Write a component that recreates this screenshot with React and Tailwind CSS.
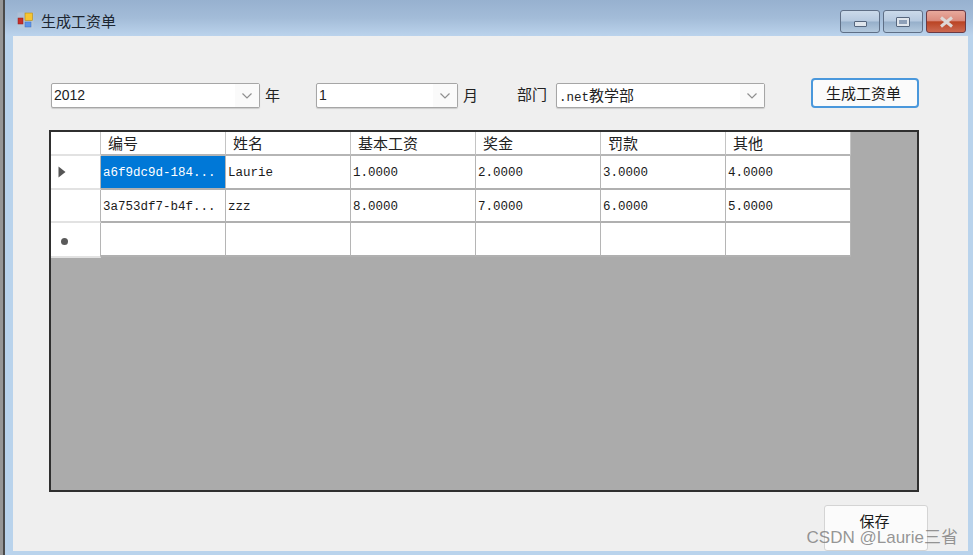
const cjk = '"Noto Sans CJK SC", "Liberation Sans", sans-serif';
const mono = '"Liberation Mono", "DejaVu Sans Mono", "Noto Sans CJK SC", monospace';
const headers = ["编号", "姓名", "基本工资", "奖金", "罚款", "其他"];
const rows = [
  ["a6f9dc9d-184...", "Laurie", "1.0000", "2.0000", "3.0000", "4.0000"],
  ["3a753df7-b4f...", "zzz", "8.0000", "7.0000", "6.0000", "5.0000"],
  ["", "", "", "", "", ""],
];
const rowH = ["h-[34px]", "h-[33px]", "h-[34px]"];

function Combo({ children, className }) {
  return (
    <div className={"h-[25px] flex items-center justify-between bg-white border border-[#a6a6a6] rounded-[2px] shadow-[0_1px_1px_rgba(0,0,0,0.15)] " + className}>
      <span className="pl-[2px] text-[14px] text-[#222] whitespace-pre" style={{ fontFamily: '"Liberation Sans", sans-serif' }}>{children}</span>
      <span className="w-[24px] h-full flex items-center justify-center bg-[#fafafa]">
        <svg width="12" height="8" viewBox="0 0 12 8" fill="none" stroke="#8f8f8f" strokeWidth="1.2"><path d="M1.5 1.5 6 6l4.5-4.5" /></svg>
      </span>
    </div>
  );
}

function WinBtn({ red, children }) {
  return (
    <div className={"w-[40px] h-[23px] rounded-[3px] border flex items-center justify-center " + (red
      ? "bg-[linear-gradient(#e8a99c_0%,#db8c7e_45%,#ba4424_52%,#cc6a52_100%)] border-[#6b3a44]"
      : "bg-[linear-gradient(#cbdaea_0%,#b6c9df_48%,#96afca_52%,#b3c8dd_100%)] border-[#5f6f86]")}>
      {children}
    </div>
  );
}

export default function App() {
  return (
    <div className="relative w-[973px] h-[555px] overflow-hidden border-l-[3px] border-[#969696]" style={{ fontFamily: cjk }}>
      <div className="w-full h-full flex flex-col bg-[#b9d3ec] border-l-2 border-[#4a4a4a]">
        <div className="h-[36px] shrink-0 flex items-start bg-[linear-gradient(#97b1cf_0%,#a3bcd8_50%,#bbd3ec_100%)] pl-[12px] pr-[7px]">
          <svg className="mt-[12px]" width="17" height="17" viewBox="0 0 17 17">
            <rect x="0.5" y="0.5" width="16" height="16" fill="#c9ced6" opacity="0.35" />
            <rect x="1" y="6" width="5" height="6" fill="#c62f2a" stroke="#8f1f1f" strokeWidth="0.5" />
            <rect x="8" y="1" width="7.5" height="7.5" fill="#f6c531" stroke="#b58a14" strokeWidth="0.6" />
            <rect x="8" y="10" width="6" height="5" fill="#5c93ea" stroke="#3f6fb8" strokeWidth="0.5" />
          </svg>
          <span className="mt-[10px] ml-[7px] text-[15px] leading-[22px] text-[#1c2530]">生成工资单</span>
          <div className="ml-auto mt-[10px] flex gap-[3px]">
            <WinBtn><div className="w-[13px] h-[6px] bg-[#dfe5ec] border border-[#55657c] rounded-[1px] mt-[4px]" /></WinBtn>
            <WinBtn><div className="w-[14px] h-[10px] bg-[#dfe5ec] border border-[#55657c] rounded-[1px] flex items-center justify-center"><div className="w-[8px] h-[4px] bg-[#8ea0b8]" /></div></WinBtn>
            <WinBtn red>
              <svg width="15" height="12" viewBox="0 0 15 12"><path d="M2 1.5 13 10.5M13 1.5 2 10.5" stroke="#ddd8d6" strokeWidth="3" /></svg>
            </WinBtn>
          </div>
        </div>

        <div className="ml-[8px] mr-[5px] mb-[4px] flex-1 min-h-0 bg-[#efefef] flex flex-col pl-[36px]">
          <div className="mt-[43px] h-[29px] flex items-end text-[15px] text-[#222] shrink-0">
            <Combo className="ml-[2px] w-[209px]">2012</Combo>
            <span className="ml-[5px] w-[51px] h-[25px] leading-[24px]">年</span>
            <Combo className="w-[142px]">1</Combo>
            <span className="ml-[5px] w-[54px] h-[25px] leading-[24px]">月</span>
            <span className="w-[39px] h-[25px] leading-[22px]">部门</span>
            <Combo className="w-[209px]"><span style={{ fontFamily: mono, fontSize: 12.5 }}>.net</span><span style={{ fontFamily: cjk, fontSize: 15 }}>教学部</span></Combo>
            <div className="ml-[46px] w-[108px] h-[30px] bg-[#fbfbfb] border-2 border-[#4a98dc] rounded-[4px] flex items-center justify-center text-[15px] text-[#1a1a1a] pr-[3px]">生成工资单</div>
          </div>

          <div className="mt-[22px] w-[870px] h-[362px] shrink-0 bg-[#ababab] border-2 border-[#2f2f2f]">
            <div className="flex h-[24px] w-[800px]">
              <div className="w-[50px] bg-white border-r border-b-2 border-[#c4c4c4] border-b-[#e2e2e2]" />
              {headers.map((h) => (
                <div key={h} className="w-[125px] pl-[7px] text-[15px] leading-[22px] bg-white border-r border-b-2 border-[#c4c4c4] border-b-[#b5b5b5] text-[#222]">{h}</div>
              ))}
            </div>
            {rows.map((r, i) => (
              <div key={i} className={"flex w-[800px] items-start " + rowH[i]}>
                <div className={"w-[50px] bg-white flex items-center border-r border-b-2 border-[#b5b5b5] border-b-[#e2e2e2] " + (i === 2 ? "h-[35px] pl-[10px]" : "h-full pl-[7px]")}>
                  {i === 0 && <svg width="8" height="12" viewBox="0 0 8 12"><path d="M0.5 0.5 7.5 6 0.5 11.5Z" fill="#555" /></svg>}
                  {i === 2 && <div className="w-[7px] h-[7px] rounded-full bg-[#5a5a5a] mt-[4px]" />}
                </div>
                {r.map((c, j) => (
                  <div key={j} className={"w-[125px] h-full pl-[2px] flex items-center whitespace-pre border-r border-b-2 border-[#b5b5b5] border-b-[#b0b0b0] " + (i === 1 ? "pt-[4px] " : "pt-[2px] ") + (i === 0 && j === 0 ? "bg-[#0078d7] text-white" : "bg-white text-[#1a1a1a]")} style={{ fontFamily: mono, fontSize: 12.5 }}>{c}</div>
                ))}
              </div>
            ))}
          </div>

          <div className="mt-[13px] ml-[775px] w-[104px] h-[46px] shrink-0 bg-[#fbfbfb] border border-[#d4d4d4] rounded-[3px] flex justify-center text-[15px] leading-[29px] text-[#1a1a1a] pr-[3px]">保存</div>
        </div>
      </div>

      <div className="absolute right-[15px] bottom-[7px] text-[17px] leading-[20px] text-[#7a7a7a]/80" style={{ fontFamily: '"Liberation Sans", "Noto Sans CJK SC", sans-serif' }}>CSDN @Laurie三省</div>
    </div>
  );
}
